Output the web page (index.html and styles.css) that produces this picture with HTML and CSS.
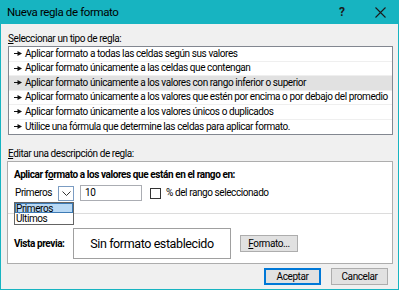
FILE: index.html
```html
<!DOCTYPE html>
<html lang="es">
<head>
    <meta charset="UTF-8">
    <title>Nueva regla de formato</title>
    <link rel="stylesheet" href="styles.css">
</head>
<body>
    <div class="dialog">
        <div class="titlebar">
            <span class="title">Nueva regla de formato</span>
            <span class="help">?</span>
            <span class="close">
                <svg width="11" height="11" viewBox="0 0 11 11"><path d="M0.5 0.5L10.5 10.5M10.5 0.5L0.5 10.5" stroke="#1b1b1b" stroke-width="1.1"/></svg>
            </span>
        </div>

        <div class="content">
            <div class="label"><u>S</u>eleccionar un tipo de regla:</div>
            <ul class="rule-list">
                <li><svg class="arrow" width="8" height="5" viewBox="0 0 8 5"><path d="M0 2.5H4" stroke="#111" stroke-width="1"/><path d="M3.5 0L8 2.5L3.5 5Z" fill="#111"/></svg>Aplicar formato a todas las celdas según sus valores</li>
                <li><svg class="arrow" width="8" height="5" viewBox="0 0 8 5"><path d="M0 2.5H4" stroke="#111" stroke-width="1"/><path d="M3.5 0L8 2.5L3.5 5Z" fill="#111"/></svg>Aplicar formato únicamente a las celdas que contengan</li>
                <li class="selected"><svg class="arrow" width="8" height="5" viewBox="0 0 8 5"><path d="M0 2.5H4" stroke="#111" stroke-width="1"/><path d="M3.5 0L8 2.5L3.5 5Z" fill="#111"/></svg>Aplicar formato únicamente a los valores con rango inferior o superior</li>
                <li><svg class="arrow" width="8" height="5" viewBox="0 0 8 5"><path d="M0 2.5H4" stroke="#111" stroke-width="1"/><path d="M3.5 0L8 2.5L3.5 5Z" fill="#111"/></svg>Aplicar formato únicamente a los valores que estén por encima o por debajo del promedio</li>
                <li><svg class="arrow" width="8" height="5" viewBox="0 0 8 5"><path d="M0 2.5H4" stroke="#111" stroke-width="1"/><path d="M3.5 0L8 2.5L3.5 5Z" fill="#111"/></svg>Aplicar formato únicamente a los valores únicos o duplicados</li>
                <li><svg class="arrow" width="8" height="5" viewBox="0 0 8 5"><path d="M0 2.5H4" stroke="#111" stroke-width="1"/><path d="M3.5 0L8 2.5L3.5 5Z" fill="#111"/></svg>Utilice una fórmula que determine las celdas para aplicar formato.</li>
            </ul>

            <div class="label label-edit"><u>E</u>ditar una descripción de regla:</div>
            <div class="edit-box">
                <div class="edit-top">
                    <div class="bold">Aplicar f<u>o</u>rmato a los valores que están en el rango en:</div>
                    <div class="controls">
                        <div class="combo">
                            <span class="combo-value">Primeros</span>
                            <span class="combo-btn">
                                <svg width="9" height="5" viewBox="0 0 9 5"><path d="M0.5 0.5L4.5 4.5L8.5 0.5" fill="none" stroke="#333" stroke-width="1"/></svg>
                            </span>
                            <ul class="dropdown">
                                <li class="active">Primeros</li>
                                <li>Últimos</li>
                            </ul>
                        </div>
                        <div class="num">10</div>
                        <span class="check"></span>
                        <span class="check-label">% del rango seleccionado</span>
                    </div>
                </div>
                <div class="preview-row">
                    <span class="bold preview-label">Vista previa:</span>
                    <div class="preview">Sin formato establecido</div>
                    <button class="btn btn-format"><u>F</u>ormato...</button>
                </div>
            </div>

            <div class="actions">
                <button class="btn btn-default">Aceptar</button>
                <button class="btn">Cancelar</button>
            </div>
        </div>
    </div>
</body>
</html>
```

FILE: styles.css
```css
* {
    box-sizing: border-box;
}

body {
    margin: 0;
    font-family: Roboto, "Noto Sans", sans-serif;
    font-size: 10px;
    letter-spacing: -0.42px;
    color: #000;
    background: #f0f0f0;
}

.dialog {
    width: 399px;
    height: 290px;
    border: 1px solid #17b4c1;
    border-top: none;
    background: #f0f0f0;
    display: flex;
    flex-direction: column;
}

.titlebar {
    height: 24px;
    margin: 0 -1px;
    background: #17b4c1;
    display: flex;
    align-items: center;
    padding-left: 7px;
    font-size: 11.5px;
    letter-spacing: -0.38px;
}

.title {
    flex: 1;
}

.help {
    width: 36px;
    font-weight: bold;
    font-size: 12px;
    color: #1b1b1b;
}

.close {
    width: 24px;
    display: flex;
}

.content {
    padding: 8px 5px 0 6px;
}

.label {
    line-height: 14px;
    padding-left: 1px;
    white-space: nowrap;
}

.label-edit {
    margin-top: 12px;
}

.rule-list {
    list-style: none;
    margin: 0 0 0 1px;
    padding: 0;
    background: #fff;
    border: 1px solid #828790;
}

.rule-list li {
    height: 14.5px;
    line-height: 14px;
    display: flex;
    align-items: center;
    padding-left: 5px;
    border-bottom: 1px solid #efefef;
    white-space: nowrap;
}

.rule-list li:last-child {
    border-bottom: none;
}

.rule-list li.selected {
    background: #e1e1e1;
}

.arrow {
    margin-right: 3px;
    flex-shrink: 0;
}

.edit-box {
    background: #fff;
    border: 1px solid #adadad;
}

.bold {
    font-weight: bold;
    white-space: nowrap;
}

.edit-top {
    padding: 6px 6px 12px;
    border-bottom: 1px solid #dcdcdc;
    line-height: 14px;
}

.controls {
    margin-top: 3px;
    display: flex;
    align-items: center;
}

.combo {
    position: relative;
    width: 60px;
    height: 15px;
    display: flex;
    align-items: center;
}

.combo-value {
    flex: 1;
    padding-left: 1px;
}

.combo-btn {
    width: 16px;
    height: 15px;
    border: 1px solid #7b9cc2;
    display: flex;
    align-items: center;
    justify-content: center;
}

.dropdown {
    position: absolute;
    top: 16px;
    left: 0;
    width: 60px;
    list-style: none;
    margin: 0;
    padding: 0;
    background: #fff;
    border: 1px solid #646464;
}

.dropdown li {
    height: 10.5px;
    line-height: 12px;
    padding-left: 1px;
}

.dropdown li.active {
    background: #b9d9f5;
    outline: 1px solid #3d7bb5;
    outline-offset: -1px;
}

.num {
    width: 62px;
    height: 16px;
    margin-left: 6px;
    border: 1px solid #abadb3;
    padding-left: 4px;
    line-height: 14px;
}

.check {
    width: 11px;
    height: 11px;
    margin-left: 8px;
    border: 1px solid #333;
    background: #fff;
}

.check-label {
    margin-left: 5px;
}

.preview-row {
    display: flex;
    align-items: center;
    padding: 14px 6px 4px;
}

.preview-label {
    width: 59px;
}

.preview {
    width: 158px;
    height: 31px;
    border: 1px solid #a0a0a0;
    display: flex;
    align-items: center;
    justify-content: center;
    font-size: 12.5px;
    letter-spacing: -0.4px;
}

.btn {
    font-family: inherit;
    font-size: 10px;
    letter-spacing: inherit;
    height: 17px;
    padding: 0;
    background: #e1e1e1;
    border: 1px solid #adadad;
    color: #000;
    line-height: 14px;
}

.btn-format {
    width: 58px;
    margin-left: 9px;
}

.actions {
    display: flex;
    justify-content: flex-end;
    gap: 10px;
    margin-top: 4px;
    padding-right: 5px;
}

.actions .btn {
    width: 57px;
}

.btn-default {
    border: 1px solid #0078d7;
    box-shadow: inset 0 0 0 1px #0078d7;
}
```
